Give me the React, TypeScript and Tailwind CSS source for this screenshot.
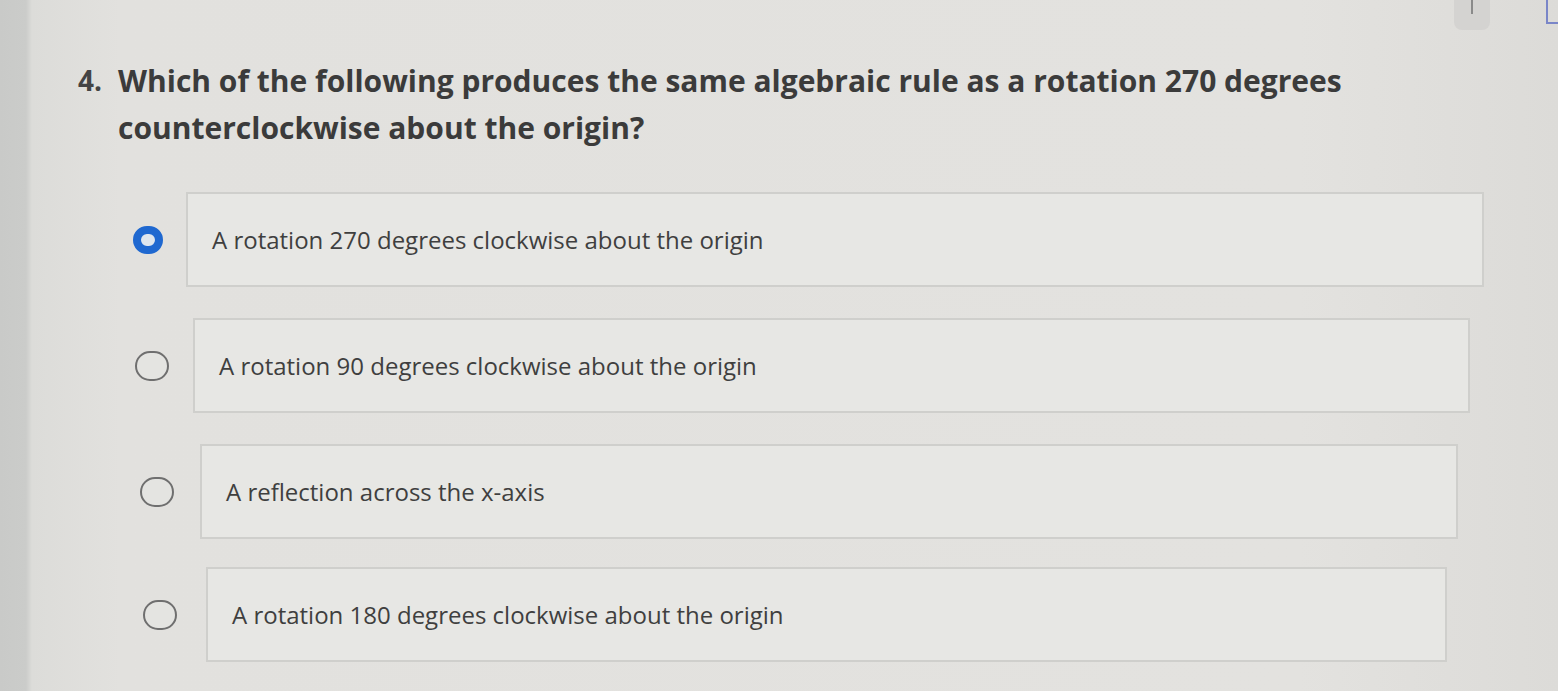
import React, { useState } from 'react';

const OPTIONS = [
  { label: 'A rotation 270 degrees clockwise about the origin', pad: 'pl-[133px]', gap: 'gap-[23px]', box: 'w-[1298px]', mt: 'mt-[33px]' },
  { label: 'A rotation 90 degrees clockwise about the origin', pad: 'pl-[135px]', gap: 'gap-[24px]', box: 'w-[1277px]', mt: 'mt-[31px]' },
  { label: 'A reflection across the x-axis', pad: 'pl-[140px]', gap: 'gap-[26px]', box: 'w-[1258px]', mt: 'mt-[31px]' },
  { label: 'A rotation 180 degrees clockwise about the origin', pad: 'pl-[143px]', gap: 'gap-[29px]', box: 'w-[1241px]', mt: 'mt-[28px]' },
];

const Radio: React.FC<{ checked: boolean }> = ({ checked }) =>
  checked ? (
    <span className="block w-[30px] h-[28px] rounded-full border-[8px] border-[#1f68d0] bg-[#dfe6ee] shrink-0" />
  ) : (
    <span className="block w-[34px] h-[30px] rounded-full border-2 border-[#6f6f6f] bg-[#e4e4e1] shrink-0" />
  );

export default function App() {
  const [selected, setSelected] = useState(0);

  return (
    <div
      className="relative w-[1558px] h-[691px] overflow-hidden bg-[linear-gradient(to_right,#c9cac8_0px,#cbccca_26px,#dcdcd9_32px,#e2e1de_120px,#e3e2df_1300px,#dcdbd8_1558px)]"
      style={{ fontFamily: '"Open Sans", "Noto Sans", sans-serif' }}
    >
      {/* top-right chrome bits */}
      <div className="absolute top-0 right-[68px] w-[36px] h-[30px] rounded-b-lg bg-[#d4d3d1] flex justify-center">
        <span className="block w-[2px] h-[14px] bg-[#8a8a8a]" />
      </div>
      <div className="absolute top-0 right-0 w-[12px] h-[24px] border-l-2 border-b-2 border-[#7a86c8]" />

      {/* Question */}
      <div className="flex pt-[57px] pl-[78px]">
        <div className="w-[40px] text-[28px] font-bold text-[#444] leading-[47px]">4.</div>
        <div className="text-[30px] font-bold text-[#3b3b3b] leading-[47px] w-[1340px]">
          Which of the following produces the same algebraic rule as a rotation 270 degrees
          <br />
          counterclockwise about the origin?
        </div>
      </div>

      {/* Options */}
      <div className="flex flex-col pt-[8px]">
        {OPTIONS.map((o, i) => (
          <div
            key={i}
            className={`flex items-center ${o.pad} ${o.gap} ${o.mt} cursor-pointer`}
            onClick={() => setSelected(i)}
          >
            <Radio checked={selected === i} />
            <div
              className={`${o.box} h-[95px] flex items-center pl-[24px] border-2 border-[#cfcfcc] bg-[#e7e7e4] text-[24px] text-[#3f3f3f]`}
            >
              {o.label}
            </div>
          </div>
        ))}
      </div>
    </div>
  );
}
